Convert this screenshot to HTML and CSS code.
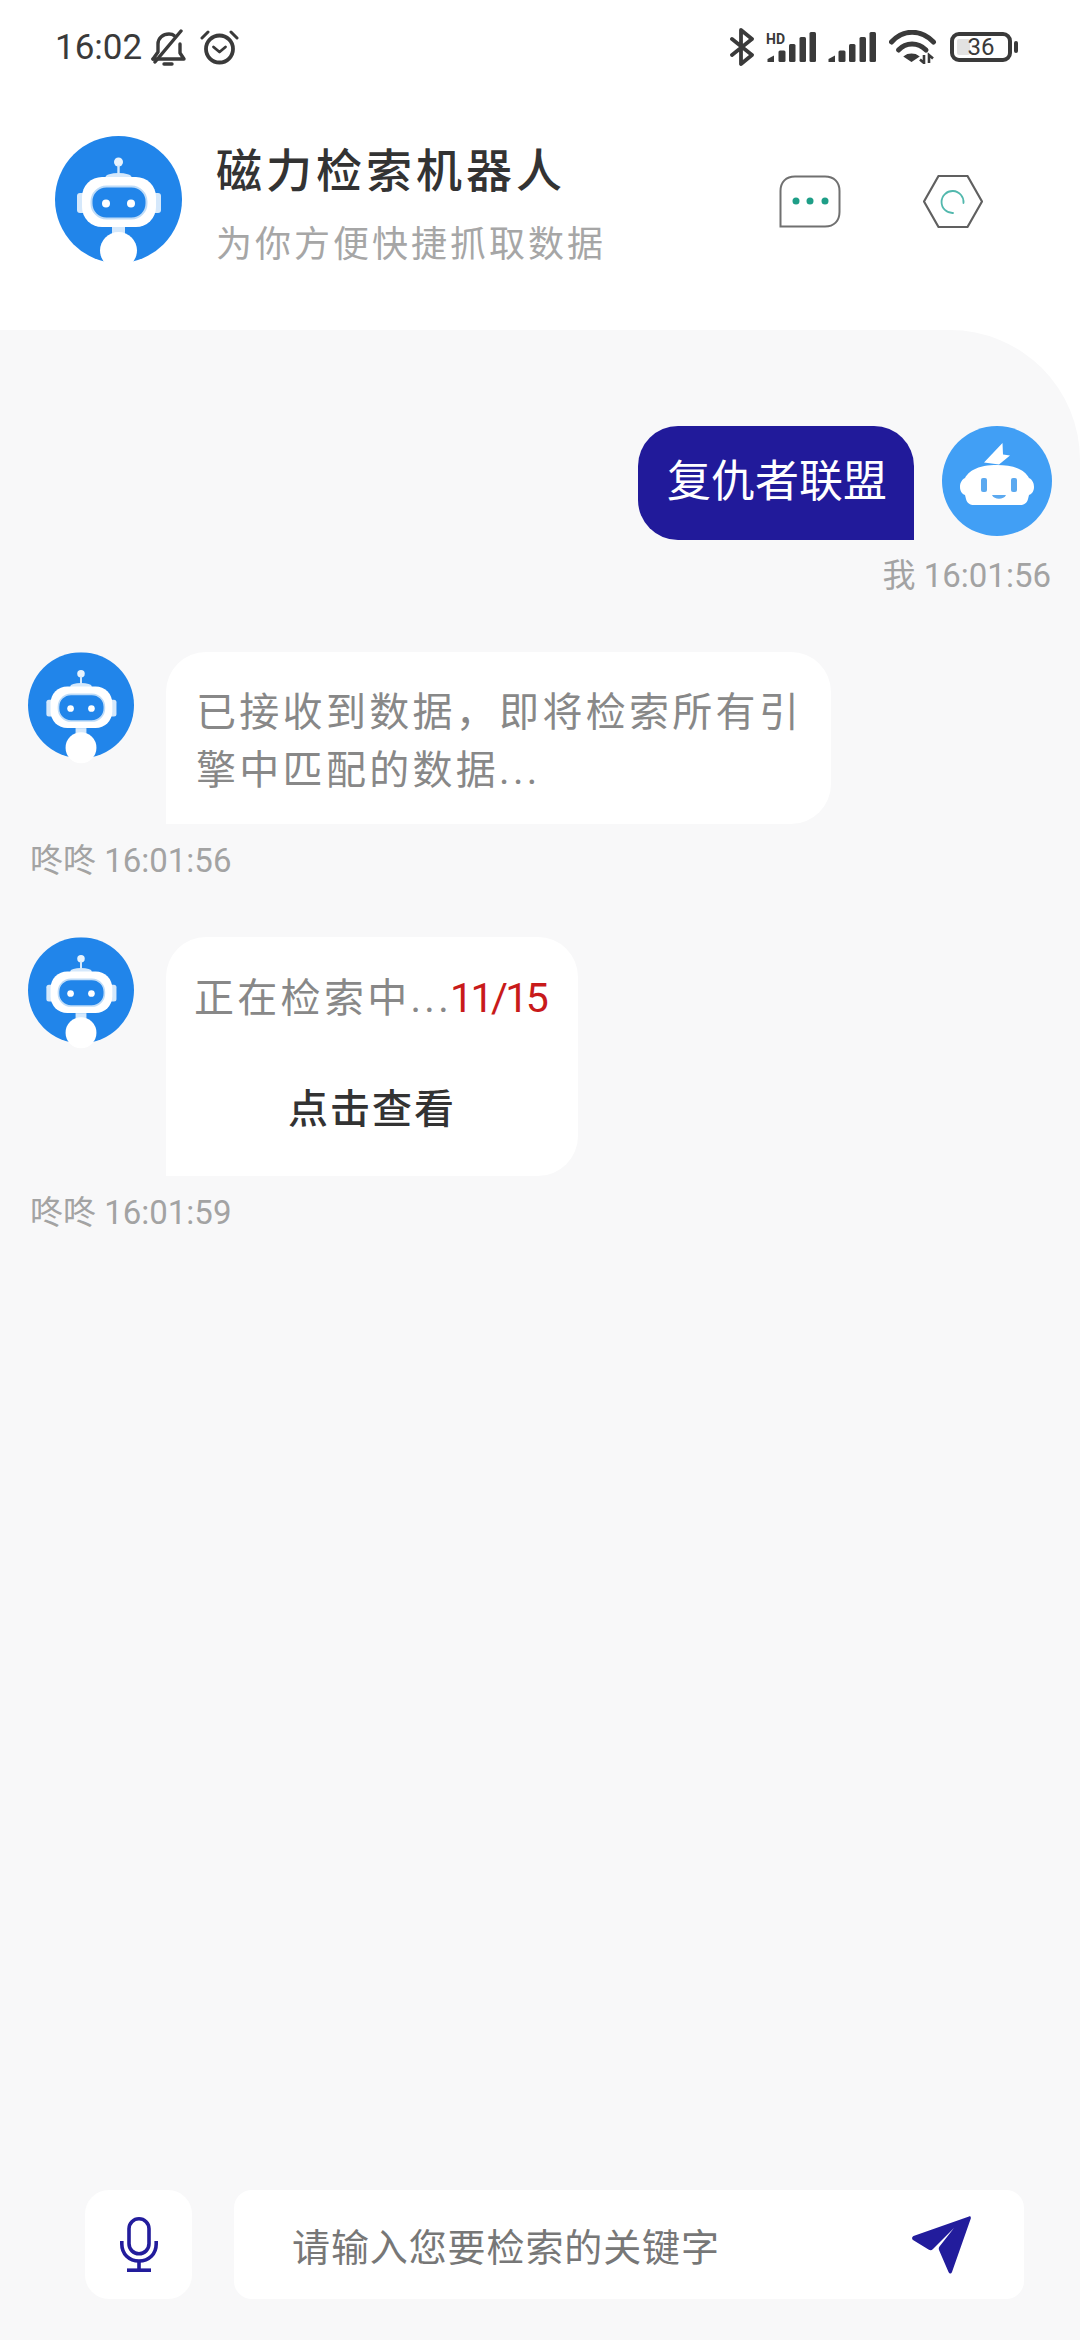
FILE: index.html
```html
<!DOCTYPE html>
<html lang="zh-CN">
<head>
<meta charset="utf-8">
<title>磁力检索机器人</title>
<link rel="stylesheet" href="styles.css">
</head>
<body>
<svg class="defs" width="0" height="0" aria-hidden="true">
  <symbol id="robot" viewBox="0 0 127 135">
    <circle cx="63.5" cy="63.5" r="63.5" fill="#2185ea"/>
    <circle cx="63.5" cy="26" r="4.5" fill="#e8f3fd"/>
    <rect x="62.3" y="29" width="2.4" height="10" fill="#d5e8fb"/>
    <ellipse cx="63.5" cy="41" rx="13" ry="4" fill="#d5e8fb"/>
    <rect x="22" y="57" width="84" height="20" rx="3" fill="#d5e8fb"/>
    <rect x="27" y="41" width="74" height="50" rx="20" fill="#fff"/>
    <rect x="36.5" y="50.5" width="55" height="32" rx="15" fill="#2185ea" stroke="#bfdcf8" stroke-width="2"/>
    <circle cx="51" cy="67.5" r="4" fill="#fff"/>
    <circle cx="76" cy="67.5" r="4" fill="#fff"/>
    <rect x="57" y="91" width="13" height="8" fill="#d5e8fb"/>
    <circle cx="63.5" cy="114.5" r="18.5" fill="#fff"/>
  </symbol>
</svg>

<header class="top">
  <div class="status">
    <span class="clock">16:02</span>
    <svg class="ic-bell" viewBox="0 0 35 37" fill="none" stroke="#3a3a3a" stroke-width="3.400" stroke-linecap="round" stroke-linejoin="round">
      <path d="M2 30 H33 L29 24 V15"/>
      <path d="M2 30 L7 23 V15 C7 9 12 5 18 5 C20 5 22 5.500 23 6.500"/>
      <path d="M4 33 L30 2"/>
      <path d="M13 35 H21"/>
    </svg>
    <svg class="ic-alarm" viewBox="0 0 39 36" fill="none" stroke="#3a3a3a" stroke-linecap="round" stroke-linejoin="round">
      <circle cx="19.500" cy="20" r="13.500" stroke-width="3.800"/>
      <path d="M13.500 18 L19.500 23 L25.500 18" stroke-width="2.800"/>
      <path d="M2 9 L8 3" stroke-width="3"/>
      <path d="M37 9 L31 3" stroke-width="3"/>
    </svg>
    <div class="status-right">
      <svg class="ic-bt" viewBox="0 0 24 38" fill="none" stroke="#3a3a3a" stroke-width="3.800" stroke-linecap="round" stroke-linejoin="round">
        <path d="M2 11 L22 27 L11 36 V2 L22 11 L2 27"/>
      </svg>
      <svg class="ic-hd" viewBox="0 0 50 31">
        <text class="hd-text" x="0" y="12">HD</text>
        <g fill="#3a3a3a">
          <path d="M1.500 30 V27 L8 23.500 V30 Z"/>
          <rect x="12.500" y="18.500" width="7" height="11.500" rx="1.500"/>
          <rect x="23" y="12" width="6.500" height="18" rx="1.500"/>
          <rect x="33.500" y="5" width="6.500" height="25" rx="1.500"/>
          <rect x="43.500" y="0" width="6.500" height="30" rx="1.500"/>
        </g>
      </svg>
      <svg class="ic-sig" viewBox="0 0 49 31">
        <g fill="#3a3a3a">
          <path d="M0.500 30 V27 L7 23.500 V30 Z"/>
          <rect x="10.500" y="18.500" width="7" height="11.500" rx="1.500"/>
          <rect x="21" y="12" width="6.500" height="18" rx="1.500"/>
          <rect x="31.500" y="5" width="6.500" height="25" rx="1.500"/>
          <rect x="41.500" y="0" width="6.500" height="30" rx="1.500"/>
        </g>
      </svg>
      <svg class="ic-wifi" viewBox="0 0 49 34" fill="none" stroke="#3a3a3a" stroke-linecap="round">
        <path d="M2.500 12 C14 -1 32 -1 44.500 12" stroke-width="5"/>
        <path d="M9.500 20 C17 12 29 12 37 20" stroke-width="5"/>
        <path d="M22.500 31 L15.500 26.500 C19 23.500 26 23.500 29.500 26.500 Z" fill="#3a3a3a" stroke-width="1.500"/>
        <path d="M35 25 V33 L31 29.500 M40 33 V25 L44 28.500" stroke-width="2.600" stroke-linecap="butt"/>
      </svg>
      <div class="battery">
        <span class="batt-fill"></span>
        <span class="batt-num">36</span>
      </div>
      <span class="batt-nub"></span>
    </div>
  </div>
  <div class="brand">
    <svg class="brand-logo" viewBox="0 0 127 135"><use href="#robot"/></svg>
    <div class="brand-text">
      <div class="brand-title">磁力检索机器人</div>
      <div class="brand-sub">为你方便快捷抓取数据</div>
    </div>
    <svg class="ic-chat" viewBox="0 0 62 53" fill="none">
      <path d="M1.500 51.500 V16 C1.500 7 7 1.500 16 1.500 H46 C55 1.500 60.500 7 60.500 16 V37 C60.500 46 55 51.500 46 51.500 Z" stroke="#707070" stroke-width="2"/>
      <circle cx="17" cy="26" r="3.500" fill="#1e9e87"/>
      <circle cx="31" cy="26" r="3.500" fill="#1e9e87"/>
      <circle cx="46" cy="26" r="3.500" fill="#1e9e87"/>
    </svg>
    <svg class="ic-hex" viewBox="0 0 60 53" fill="none">
      <path d="M1 26.500 L15.500 1 H44.500 L59 26.500 L44.500 52 H15.500 Z" stroke="#606060" stroke-width="2.200" stroke-linejoin="round"/>
      <path d="M40.500 28 A11 11 0 1 0 30 38" stroke="#52b8ad" stroke-width="1.800" stroke-linecap="round"/>
    </svg>
  </div>
</header>

<main class="chat">
  <section class="group">
    <div class="row row-me">
      <div class="bubble bubble-me">复仇者联盟</div>
      <svg class="avatar-me" viewBox="0 0 110 110">
        <circle cx="55" cy="55" r="55" fill="#419ff5"/>
        <path d="M60.500 17 L42 36.500 L57 38.500 L68 29.500 L61 28.500 Z" fill="#fff"/>
        <path d="M31 44 C38 40 46 39 55 39 C64 39 72 40 79 44 C84 47 86 50 87 52 C91 54 92 58 92 61 C92 65 90 68 87 69 L86 73 C85 77 82 79 78 79 L32 79 C28 79 25 77 24 73 L23 69 C20 68 18 65 18 61 C18 58 19 54 23 52 C24 50 26 47 31 44 Z" fill="#fff"/>
        <rect x="39" y="52" width="6" height="14" rx="2" fill="#5ba9f0"/>
        <rect x="69" y="52" width="6" height="14" rx="2" fill="#5ba9f0"/>
        <path d="M50 69 H64 C62 74 52 74 50 69 Z" fill="#5ba9f0"/>
      </svg>
    </div>
    <div class="meta meta-me">我 16:01:56</div>
  </section>

  <section class="group">
    <div class="row">
      <svg class="avatar-bot" viewBox="0 0 127 135"><use href="#robot"/></svg>
      <div class="bubble bubble-bot bubble-wide">已接收到数据，即将检索所有引<br>擎中匹配的数据...</div>
    </div>
    <div class="meta">咚咚 16:01:56</div>
  </section>

  <section class="group">
    <div class="row">
      <svg class="avatar-bot" viewBox="0 0 127 135"><use href="#robot"/></svg>
      <div class="bubble bubble-bot bubble-status">
        <div>正在检索中...<span class="count">11/15</span></div>
        <div class="action">点击查看</div>
      </div>
    </div>
    <div class="meta">咚咚 16:01:59</div>
  </section>

  <footer class="composer">
    <div class="mic-tile">
      <svg class="ic-mic" viewBox="0 0 38 55" fill="none" stroke="#221c9c" stroke-width="3.600">
        <rect x="9" y="1.800" width="20" height="35" rx="10"/>
        <path d="M1.800 24 V27 C1.800 37 9 44 19 44 C29 44 36.200 37 36.200 27 V24"/>
        <path d="M19 44 V53"/>
        <path d="M7 53.200 H31"/>
      </svg>
    </div>
    <div class="input">
      <span class="placeholder">请输入您要检索的关键字</span>
      <svg class="ic-send" viewBox="0 0 59 58">
        <path d="M57 0.500 C58.500 0 59 1 58.800 2.500 L40 56 C39 58 37.500 58 36.500 56 L27 34 C26.500 32.500 26.800 31.500 27.500 30.500 L42 12 L21 33 C19.500 34.500 18 34.500 16.500 33.500 L1 24 C-0.500 22.500 0 21 1.500 20 Z" fill="#221c9c"/>
      </svg>
    </div>
  </footer>
</main>
</body>
</html>
```
FILE: styles.css
```css
* { box-sizing: border-box; }
html, body { margin: 0; padding: 0; }
body {
  width: 1080px;
  height: 2340px;
  overflow: hidden;
  display: flex;
  flex-direction: column;
  background: #fff;
  font-family: Roboto, "Noto Sans CJK SC", sans-serif;
}
svg { display: block; flex: none; }
.defs { position: absolute; }

.top { height: 330px; flex: none; display: flex; flex-direction: column; }

.status {
  height: 92px;
  padding: 2px 62px 0 55px;
  display: flex;
  align-items: center;
  color: #3a3a3a;
}
.clock { font-size: 35px; width: 84px; margin-right: 12px; letter-spacing: 0; white-space: nowrap; }
.ic-bell { width: 35px; height: 37px; margin-right: 14px; }
.ic-alarm { width: 39px; height: 36px; }
.status-right { margin-left: auto; display: flex; align-items: center; gap: 12px; }
.ic-bt { width: 24px; height: 38px; }
.ic-hd { width: 50px; height: 31px; }
.ic-sig { width: 49px; height: 31px; }
.ic-wifi { width: 49px; height: 34px; }
.hd-text { font: 700 14px Roboto, sans-serif; fill: #3a3a3a; }
.battery {
  position: relative;
  width: 62px;
  height: 30px;
  border: 4px solid #3a3a3a;
  border-radius: 9px;
}
.batt-fill { position: absolute; left: 3px; top: 3px; width: 13px; height: 16px; background: #e2e2e2; border-radius: 2px; }
.batt-num {
  position: absolute;
  inset: 0;
  text-align: center;
  font-size: 24px;
  line-height: 22px;
  color: #3a3a3a;
}
.batt-nub { width: 4px; height: 12px; margin-left: -10px; background: #3a3a3a; border-radius: 2px; }

.brand {
  padding: 44px 97px 0 55px;
  display: flex;
  align-items: flex-start;
}
.brand-logo { width: 127px; height: 135px; }
.brand-text { margin-left: 34px; margin-top: 2px; flex: 1; }
.brand-title {
  font-size: 46px;
  line-height: 66px;
  font-weight: 500;
  letter-spacing: 4px;
  color: #333;
}
.brand-sub {
  margin-top: 16px;
  font-size: 36px;
  line-height: 50px;
  letter-spacing: 3px;
  color: #a6a6a6;
}
.ic-chat { width: 62px; height: 53px; margin-top: 39px; }
.ic-hex { width: 60px; height: 53px; margin-top: 39px; margin-left: 82px; }

.chat {
  flex: 1;
  display: flex;
  flex-direction: column;
  padding-top: 96px;
  background: #f8f8f9;
  border-top-right-radius: 130px;
}
.group { margin-bottom: 56px; }
.row { display: flex; align-items: flex-start; padding-left: 28px; gap: 32px; }
.row-me { justify-content: flex-end; padding: 0 28px 0 0; gap: 28px; }

.bubble { font-size: 40px; line-height: 58px; letter-spacing: 3.300px; }
.bubble-me {
  width: 276px;
  height: 114px;
  padding-left: 29px;
  font-size: 44px;
  line-height: 112px;
  letter-spacing: 0;
  color: #fff;
  background: #211a9a;
  border-radius: 40px 40px 0 40px;
}
.avatar-me { width: 110px; height: 110px; }
.avatar-bot { width: 106px; height: 113px; }
.bubble-bot {
  color: #888;
  background: #fff;
  border-radius: 40px 40px 40px 0;
}
.bubble-wide { width: 665px; height: 172px; padding: 32px 10px 0 30px; }
.bubble-status { width: 412px; height: 239px; padding: 32px 0 0 28px; }
.count { color: #c81a1a; letter-spacing: -2.600px; font-size: 41px; margin-left: -2px; }
.action {
  margin: 53px 28px 0 0;
  text-align: center;
  font-weight: 500;
  color: #333;
  letter-spacing: 2px;
}

.meta {
  margin-top: 17px;
  padding-left: 30px;
  font-size: 33px;
  line-height: 40px;
  color: #a3a3a3;
}
.meta-me { margin-top: 16px; padding: 0 29px 0 0; text-align: right; }

.composer {
  margin-top: auto;
  padding: 0 56px 41px 85px;
  display: flex;
  gap: 42px;
}
.mic-tile {
  width: 107px;
  height: 109px;
  display: flex;
  align-items: center;
  justify-content: center;
  background: #fff;
  border-radius: 24px;
}
.ic-mic { width: 38px; height: 55px; }
.input {
  flex: 1;
  height: 109px;
  padding: 0 53px 0 58px;
  display: flex;
  align-items: center;
  justify-content: space-between;
  background: #fff;
  border-radius: 18px;
}
.placeholder { font-size: 38px; letter-spacing: 0.900px; color: #777; }
.ic-send { width: 59px; height: 58px; }
```
